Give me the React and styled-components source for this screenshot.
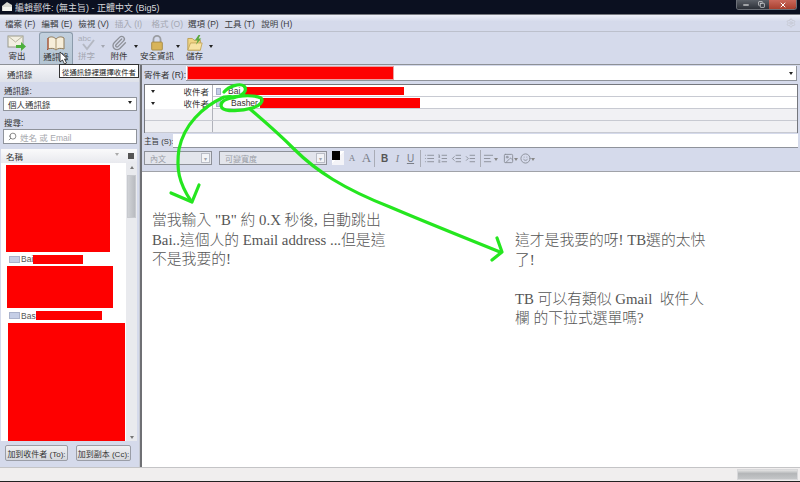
import React from 'react';
import styled, { createGlobalStyle } from 'styled-components';
import {
  Search, List, ListOrdered, IndentDecrease, IndentIncrease, AlignLeft, Image, Smile, Paperclip,
  Minus, Copy, X, Settings,
} from 'lucide-react';

const GlobalStyle = createGlobalStyle`
  html, body { margin: 0; padding: 0; background: #fff; }
  body { font-family: "Liberation Sans", "Noto Sans CJK TC", sans-serif; }
  * { box-sizing: border-box; }
`;

const Window = styled.div`
  position: relative;
  width: 800px;
  height: 482px;
  overflow: hidden;
  display: flex;
  flex-direction: column;
  background: #d5daeb;
  color: #333;
  font-size: 9px;
`;

// Title bar
const TitleBar = styled.div`
  height: 15px;
  flex: none;
  display: flex;
  align-items: center;
  padding-left: 2px;
  background: #0b1020;
  border-bottom: 1px solid #77797f;
  color: #d6d8dc;
  font-size: 9px;
`;

const TitleText = styled.span`
  margin-left: 2px;
  flex: 1;
`;

const WindowButtons = styled.div`
  display: flex;
  align-self: flex-start;
  margin-right: 3px;
  height: 10px;
  border: 1px solid #6c7078;
  border-top: 0;
  border-radius: 0 0 3px 3px;
  overflow: hidden;
`;

const WindowButton = styled.div`
  width: ${p => p.$w}px;
  display: flex;
  align-items: center;
  justify-content: center;
  color: #fff;
  background: ${p => (p.$close ? 'linear-gradient(#c9675a, #a8402f)' : 'linear-gradient(#5b6068, #2c3038)')};
`;

// Menu bar
const MenuBar = styled.div`
  height: 17px;
  flex: none;
  display: flex;
  align-items: center;
  padding: 0 4px 0 5px;
  border-bottom: 1px solid #bcc0cc;
  background: linear-gradient(#eef0f8, #d5daeb 40%);
`;

const MenuItem = styled.span`
  width: 36.6px;
  font-size: 8.5px;
  white-space: nowrap;
  color: ${p => (p.$disabled ? '#a4a7b1' : '#3a3a3e')};
`;

const GearSlot = styled.span`
  margin-left: auto;
  display: flex;
  color: #c4c7d0;
`;

// Toolbar
const Toolbar = styled.div`
  height: 33px;
  flex: none;
  display: flex;
  align-items: stretch;
  padding-left: 3px;
  border-bottom: 1px solid #8d9096;
`;

const ToolButton = styled.div`
  width: ${p => p.$w}px;
  margin-right: ${p => p.$gap || 0}px;
  display: flex;
  flex-direction: column;
  align-items: center;
  padding-top: 2px;
  border-radius: 3px 3px 0 0;
  font-size: 8.5px;
  line-height: 11px;
  white-space: nowrap;
  color: ${p => (p.$disabled ? '#a4a7b1' : '#333')};
  ${p => p.$active && 'background: linear-gradient(#c2d0de, #b4c5d3); border: 1px solid #8b9bab; border-bottom: 0;'}
`;

const ToolIcon = styled.div`
  height: 17px;
  display: flex;
  align-items: center;
  justify-content: center;
`;

const DropArrow = styled.span`
  align-self: center;
  margin: -4px 0 0 ${p => p.$left || 0}px;
  margin-right: ${p => p.$right || 0}px;
  width: 0;
  height: 0;
  border-left: 2.5px solid transparent;
  border-right: 2.5px solid transparent;
  border-top: 3px solid ${p => p.$color || '#222'};
`;

// Main split
const Main = styled.div`
  flex: 1;
  min-height: 0;
  display: grid;
  grid-template-columns: 140px 2px 1fr;
`;

const Splitter = styled.div`
  background: #6f7074;
`;

const Sidebar = styled.aside`
  display: flex;
  flex-direction: column;
  min-height: 0;
  border-right: 1px solid #c5c8d0;
`;

const SideTab = styled.div`
  height: 17px;
  flex: none;
  padding: 3px 0 0 7px;
  background: linear-gradient(#f4f5f8, #dfe2ea);
  font-size: 8.5px;
`;

const FieldLabel = styled.div`
  font-size: 8.5px;
  height: ${p => p.$h}px;
  padding: ${p => p.$top}px 0 0 4px;
`;

const SelectBox = styled.div`
  height: 14px;
  margin: 0 2px 0 3px;
  padding: 0 4px;
  display: flex;
  align-items: center;
  justify-content: space-between;
  background: #fff;
  border: 1px solid #8f939b;
  font-size: 8.5px;
`;

const SearchBox = styled(SelectBox)`
  height: 15px;
  justify-content: flex-start;
  gap: 3px;
  color: #a6a8ad;
`;

const ListHeader = styled.div`
  height: 14px;
  margin: 5px 2px 0 1px;
  flex: none;
  display: flex;
  align-items: center;
  padding: 0 3px 0 5px;
  background: linear-gradient(#fafafb, #e8e9ee);
  font-size: 8.5px;
`;

const HeaderTools = styled.span`
  margin-left: auto;
  display: flex;
  align-items: center;
  gap: 9px;
`;

const PickIcon = styled.span`
  width: 6px;
  height: 6px;
  background: #555;
`;

const ContactArea = styled.div`
  height: 278px;
  flex: none;
  margin: 0 2px 0 1px;
  display: grid;
  grid-template-columns: 1fr 11px;
  background: #fff;
`;

const ContactList = styled.div`
  overflow: hidden;
`;

const RedBlock = styled.div`
  background: #fe0000;
  margin-left: ${p => p.$left}px;
  margin-top: ${p => p.$top || 0}px;
  width: ${p => p.$w}px;
  height: ${p => p.$h}px;
`;

const ContactRow = styled.div`
  display: flex;
  align-items: center;
  height: ${p => p.$h}px;
  padding-left: 8px;
  font-size: 8.5px;
  color: #555;
`;

const CardIcon = styled.span`
  width: 11px;
  height: 7px;
  margin-right: 1px;
  background: #c5cee6;
  border: 1px solid #aab3cc;
`;

const ContactRed = styled.span`
  background: #fe0000;
  width: ${p => p.$w}px;
  height: 9px;
`;

const Scrollbar = styled.div`
  display: flex;
  flex-direction: column;
  align-items: center;
  justify-content: space-between;
  padding: 3px 0 2px;
  background: #e9eaee;
`;

const ScrollThumb = styled.div`
  width: 9px;
  height: 43px;
  margin-top: 6px;
  margin-bottom: auto;
  background: linear-gradient(90deg, #d0d2d6, #b9bbc0);
  border: 1px solid #c8cacf;
`;

const SideButtons = styled.div`
  display: flex;
  gap: 8px;
  padding: 4px 0 0 5px;
`;

const SideButton = styled.div`
  width: ${p => p.$w}px;
  height: 16px;
  display: flex;
  align-items: center;
  justify-content: center;
  background: linear-gradient(#eff0f3, #d5d7dc);
  border: 1px solid #9a9da6;
  border-radius: 2px;
  font-size: 8px;
  white-space: nowrap;
`;

// Compose pane
const Compose = styled.section`
  display: flex;
  flex-direction: column;
  min-height: 0;
`;

const FromRow = styled.div`
  display: flex;
  align-items: center;
  height: 19px;
  padding: 1px 3px 3px 2px;
`;

const FromLabel = styled.span`
  width: 42px;
  font-size: 8.5px;
  white-space: nowrap;
`;

const FromInput = styled.div`
  flex: 1;
  height: 15px;
  display: flex;
  align-items: center;
  justify-content: space-between;
  padding: 0 3px 0 2px;
  background: #fff;
  border-bottom: 1px solid #8f939b;
  border-right: 1px solid #8f939b;
`;

const SenderRed = styled.span`
  width: 205px;
  height: 12px;
  background: #fe0000;
  box-shadow: 0 0 0 1px #e9a0a0;
`;

const RecipientTable = styled.div`
  margin: 0 2px;
  height: 49px;
  border: 1px solid #75777d;
  background: #f1f1f4;
`;

const RecipientRow = styled.div`
  display: grid;
  grid-template-columns: 68px 1fr;
  height: 12px;
  border-bottom: 1px solid #c8cad2;
  background: ${p => (p.$filled ? '#fff' : '#f1f1f4')};
`;

const TypeCell = styled.div`
  display: flex;
  align-items: center;
  justify-content: space-between;
  padding: 0 3px 0 6px;
  font-size: 8.5px;
  background: ${p => (p.$filled ? '#fff' : 'transparent')};
  border-right: 1px solid #b0b2ba;
`;

const AddressCell = styled.div`
  display: flex;
  align-items: center;
  padding-left: 3px;
  font-size: 8.5px;
`;

const AddressIcon = styled.span`
  width: 5px;
  height: 7px;
  background: #c5cee6;
  border: 1px solid #a5aec8;
`;

const AddressName = styled.span`
  margin-left: ${p => p.$left}px;
  width: ${p => p.$w}px;
  color: #3a3030;
`;

const AddressRed = styled.span`
  background: #fe0000;
  width: ${p => p.$w}px;
  height: ${p => p.$h}px;
`;

const SubjectRow = styled.div`
  display: flex;
  align-items: center;
  height: 15px;
  padding: 0 2px;
`;

const SubjectLabel = styled.span`
  width: 29px;
  font-size: 7.6px;
  white-space: nowrap;
`;

const SubjectInput = styled.div`
  flex: 1;
  height: 14px;
  background: #fff;
  border-bottom: 1px solid #8f939b;
`;

const FormatBar = styled.div`
  height: 24px;
  flex: none;
  display: flex;
  align-items: center;
  padding: 0 0 3px 2px;
  border-bottom: 1px solid #a0a2a8;
  color: #6c7078;
`;

const StyleSelect = styled.div`
  width: ${p => p.$w}px;
  height: 14px;
  margin-right: ${p => p.$gap}px;
  display: flex;
  align-items: center;
  justify-content: space-between;
  padding: 0 1px 0 5px;
  background: #e3e5ec;
  border: 1px solid #8d9098;
  font-size: 8px;
  color: #9a9da6;
`;

const SelectCaret = styled.span`
  width: 9px;
  height: 10px;
  display: flex;
  align-items: center;
  justify-content: center;
  background: #f3f4f7;
  border: 1px solid #babdc6;
  color: #a0a3ab;
  font-size: 6px;
`;

const ColorSwatch = styled.div`
  position: relative;
  width: 12px;
  height: 14px;
  margin-right: 1px;
  background: linear-gradient(135deg, #fff 50%, #f4f4f8 50%);
`;

const ColorFront = styled.span`
  position: absolute;
  left: 0;
  top: 0;
  width: 8px;
  height: 9px;
  background: #000;
`;

const FormatGlyph = styled.span`
  width: ${p => p.$w}px;
  text-align: center;
  font-family: ${p => (p.$serif ? '"Liberation Serif", serif' : 'inherit')};
  font-size: ${p => p.$size || 10}px;
  font-weight: ${p => (p.$bold ? 700 : 400)};
  font-style: ${p => (p.$italic ? 'italic' : 'normal')};
  text-decoration: ${p => (p.$under ? 'underline' : 'none')};
  color: ${p => p.$color || '#7a7e88'};
`;

const FormatIcon = styled.span`
  width: ${p => p.$w}px;
  display: flex;
  justify-content: center;
  color: #8a8e98;
`;

const FormatSep = styled.span`
  width: 1px;
  height: 17px;
  margin-left: ${p => p.$left}px;
  margin-right: ${p => p.$right}px;
  background: #a9acb6;
`;

const MessageBody = styled.div`
  flex: 1;
  min-height: 0;
  display: grid;
  grid-template-columns: 363px 1fr;
  background: #fff;
  font-family: "Liberation Serif", "Noto Sans CJK TC", serif;
  font-size: 14.8px;
  line-height: 19.6px;
  font-weight: 300;
  color: #555;
`;

const Note = styled.div`
  padding: ${p => p.$top}px 0 0 ${p => p.$left}px;
  white-space: pre;
`;

const NoteLine = styled.div`
  min-height: 19.6px;
`;

const StatusBar = styled.div`
  height: 15px;
  flex: none;
  display: flex;
  justify-content: flex-end;
  padding: 1px 2px 1px 0;
  background: #f0eeee;
  border-top: 1px solid #c4c4c6;
  border-bottom: 1px solid #222;
`;

const ProgressSlot = styled.div`
  width: 61px;
  background: linear-gradient(#e4e4e4, #b4b6b8 40%, #c4c6c8);
  border: 1px solid #d8d8da;
`;

// Things lying over the window
const Tooltip = styled.div`
  position: absolute;
  left: 59px;
  top: 64px;
  width: 80px;
  height: 14px;
  display: flex;
  align-items: center;
  justify-content: center;
  background: #fff;
  border: 1px solid #333;
  font-size: 7.4px;
  white-space: nowrap;
  color: #222;
`;

const Pointer = styled.svg`
  position: absolute;
  left: 59px;
  top: 51px;
`;

const Scribble = styled.svg`
  position: absolute;
  inset: 0;
  pointer-events: none;
`;

const menus = [
  ['檔案 (F)'], ['編輯 (E)'], ['檢視 (V)'], ['插入 (I)', true], ['格式 (O)', true],
  ['選項 (P)'], ['工具 (T)'], ['說明 (H)'],
];

const SendIcon = () => (
  <svg width="20" height="17" viewBox="0 0 20 17">
    <rect x="1" y="2" width="15" height="11" fill="#f2efe2" stroke="#9a9a8c" />
    <path d="M1 2l7.5 6L16 2" fill="none" stroke="#b8b6a0" />
    <path d="M9 11h5V8l5 4.5-5 4.5v-3H9z" fill="#4caf3c" />
  </svg>
);

const BookIcon = () => (
  <svg width="20" height="17" viewBox="0 0 20 17">
    <path d="M2 3c3-2 6-1 8 1 2-2 5-3 8-1v11c-3-1-6-1-8 1-2-2-5-2-8-1z" fill="#f6eeda" stroke="#8f7a58" />
    <path d="M10 4v11" stroke="#a99670" />
    <path d="M2 3v11l-1 1" fill="none" stroke="#b2492f" />
  </svg>
);

const SpellIcon = () => (
  <svg width="20" height="17" viewBox="0 0 20 17">
    <text x="1" y="7" fontSize="8" fontFamily="Liberation Sans" fill="#a9adb8">abc</text>
    <path d="M6 10l4 5 7-9" fill="none" stroke="#b4b8c2" strokeWidth="2" />
  </svg>
);

const LockIcon = () => (
  <svg width="16" height="17" viewBox="0 0 18 19">
    <path d="M5 9V6a4 4 0 0 1 8 0v3" fill="none" stroke="#9b9da2" strokeWidth="2" />
    <rect x="3" y="9" width="12" height="9" rx="1" fill="#d8b45a" stroke="#a58a44" />
  </svg>
);

const SaveIcon = () => (
  <svg width="18" height="17" viewBox="0 0 20 19">
    <path d="M2 5h5l2 2h7v11H2z" fill="#f0d585" stroke="#b89a4e" />
    <path d="M2 18l3-8h13l-2 8z" fill="#f7e3a3" stroke="#c4a75c" />
    <path d="M14 1l-4 6h3l-2 5 6-7h-3l2-4z" fill="#5aa83c" />
  </svg>
);

const App = () => (
  <Window>
    <GlobalStyle />
    <TitleBar>
      <svg width="11" height="10" viewBox="0 0 11 10">
        <path d="M0 4l5-4 5 3v6H0z" fill="#d8d8d0" />
        <path d="M1 5h9v4H1z" fill="#f4f4ee" />
      </svg>
      <TitleText>編輯郵件: (無主旨) - 正體中文 (Big5)</TitleText>
      <WindowButtons>
        <WindowButton $w={17}><Minus size={8} strokeWidth={3} /></WindowButton>
        <WindowButton $w={15}><Copy size={7} strokeWidth={2} /></WindowButton>
        <WindowButton $w={27} $close><X size={8} strokeWidth={3} /></WindowButton>
      </WindowButtons>
    </TitleBar>

    <MenuBar>
      {menus.map(([label, disabled]) => (
        <MenuItem key={label} $disabled={disabled}>{label}</MenuItem>
      ))}
      <GearSlot><Settings size={10} /></GearSlot>
    </MenuBar>

    <Toolbar>
      <ToolButton $w={28} $gap={8}><ToolIcon><SendIcon /></ToolIcon>寄出</ToolButton>
      <ToolButton $w={34} $active><ToolIcon><BookIcon /></ToolIcon>通訊錄</ToolButton>
      <ToolButton $w={27} $disabled><ToolIcon><SpellIcon /></ToolIcon>拼字</ToolButton>
      <DropArrow $color="#a4a7b1" $left={1} />
      <ToolButton $w={28}><ToolIcon><Paperclip size={16} color="#8e9199" /></ToolIcon>附件</ToolButton>
      <DropArrow $left={1} />
      <ToolButton $w={38}><ToolIcon><LockIcon /></ToolIcon>安全資訊</ToolButton>
      <DropArrow />
      <ToolButton $w={29}><ToolIcon><SaveIcon /></ToolIcon>儲存</ToolButton>
      <DropArrow />
    </Toolbar>

    <Main>
      <Sidebar>
        <SideTab>通訊錄</SideTab>
        <FieldLabel $h={15} $top={2}>通訊錄:</FieldLabel>
        <SelectBox>個人通訊錄<DropArrow /></SelectBox>
        <FieldLabel $h={18} $top={5}>搜尋:</FieldLabel>
        <SearchBox>
          <Search size={9} color="#666" style={{ transform: 'scaleX(-1)' }} />
          姓名 或 Email
        </SearchBox>
        <ListHeader>
          名稱
          <HeaderTools>
            <DropArrow $color="#aaa" />
            <PickIcon />
          </HeaderTools>
        </ListHeader>
        <ContactArea>
          <ContactList>
            <RedBlock $left={5} $top={2} $w={104} $h={87} />
            <ContactRow $h={14}><CardIcon />Bai<ContactRed $w={50} /></ContactRow>
            <RedBlock $left={6} $w={106} $h={42} />
            <ContactRow $h={15}><CardIcon />Bas<ContactRed $w={66} /></ContactRow>
            <RedBlock $left={7} $w={117} $h={118} />
          </ContactList>
          <Scrollbar>
            <DropArrow $color="#777" style={{ transform: 'rotate(180deg)', margin: 0 }} />
            <ScrollThumb />
            <DropArrow $color="#777" style={{ margin: 0 }} />
          </Scrollbar>
        </ContactArea>
        <SideButtons>
          <SideButton $w={63}>加到收件者 (To):</SideButton>
          <SideButton $w={55}>加到副本 (Cc):</SideButton>
        </SideButtons>
      </Sidebar>
      <Splitter />
      <Compose>
        <FromRow>
          <FromLabel>寄件者 (R):</FromLabel>
          <FromInput>
            <SenderRed />
            <DropArrow style={{ margin: 0 }} />
          </FromInput>
        </FromRow>
        <RecipientTable>
          <RecipientRow $filled>
            <TypeCell $filled><DropArrow style={{ margin: 0 }} />收件者</TypeCell>
            <AddressCell>
              <AddressIcon />
              <AddressName $left={7} $w={17}>Bai</AddressName>
              <AddressRed $w={159} $h={8} />
            </AddressCell>
          </RecipientRow>
          <RecipientRow $filled>
            <TypeCell $filled><DropArrow style={{ margin: 0 }} />收件者</TypeCell>
            <AddressCell>
              <AddressIcon />
              <AddressName $left={10} $w={29}>Basher</AddressName>
              <AddressRed $w={160} $h={10} />
            </AddressCell>
          </RecipientRow>
          <RecipientRow><TypeCell /></RecipientRow>
          <RecipientRow><TypeCell /></RecipientRow>
        </RecipientTable>
        <SubjectRow>
          <SubjectLabel>主旨 (S):</SubjectLabel>
          <SubjectInput />
        </SubjectRow>
        <FormatBar>
          <StyleSelect $w={68} $gap={7}>內文<SelectCaret>▾</SelectCaret></StyleSelect>
          <StyleSelect $w={108} $gap={5}>可變寬度<SelectCaret>▾</SelectCaret></StyleSelect>
          <ColorSwatch><ColorFront /></ColorSwatch>
          <FormatGlyph $w={14} $size={9} $serif>A</FormatGlyph>
          <FormatGlyph $w={15} $size={13} $serif>A</FormatGlyph>
          <FormatSep $left={0} $right={3} />
          <FormatGlyph $w={13} $bold $color="#555">B</FormatGlyph>
          <FormatGlyph $w={13} $italic $serif>I</FormatGlyph>
          <FormatGlyph $w={13} $under>U</FormatGlyph>
          <FormatSep $left={3} $right={2} />
          <FormatIcon $w={13}><List size={11} /></FormatIcon>
          <FormatIcon $w={13}><ListOrdered size={11} /></FormatIcon>
          <FormatIcon $w={14}><IndentDecrease size={11} /></FormatIcon>
          <FormatIcon $w={14}><IndentIncrease size={11} /></FormatIcon>
          <FormatSep $left={3} $right={2} />
          <FormatIcon $w={11}><AlignLeft size={11} /></FormatIcon>
          <DropArrow $color="#888" $right={4} style={{ marginTop: 2 }} />
          <FormatIcon $w={12}><Image size={11} /></FormatIcon>
          <DropArrow $color="#888" $right={1} style={{ marginTop: 2 }} />
          <FormatIcon $w={12}><Smile size={11} /></FormatIcon>
          <DropArrow $color="#888" style={{ marginTop: 2 }} />
        </FormatBar>
        <MessageBody>
          <Note $top={39} $left={10}>
            <NoteLine>當我輸入 "B" 約 0.X 秒後, 自動跳出</NoteLine>
            <NoteLine>Bai..這個人的 Email address ...但是這</NoteLine>
            <NoteLine>不是我要的!</NoteLine>
          </Note>
          <Note $top={59} $left={10}>
            <NoteLine>這才是我要的呀! TB選的太快</NoteLine>
            <NoteLine>了!</NoteLine>
            <NoteLine />
            <NoteLine>TB 可以有類似 Gmail  收件人</NoteLine>
            <NoteLine>欄 的下拉式選單嗎?</NoteLine>
          </Note>
        </MessageBody>
      </Compose>
    </Main>

    <StatusBar><ProgressSlot /></StatusBar>

    <Tooltip>從通訊錄裡選擇收件者</Tooltip>
    <Pointer width="9" height="14" viewBox="0 0 9 14">
      <path d="M1 1v10l2.500-2 2 4 2-1-2-4h3z" fill="#fff" stroke="#222" strokeWidth="0.8" />
    </Pointer>

    <Scribble width="800" height="482" viewBox="0 0 800 482" fill="none" stroke="#25e61f" strokeWidth="3.2" strokeLinecap="round" strokeLinejoin="round">
      <path d="M224 92c5-6 16-9 20-6 3 3 1 7-3 9" />
      <path d="M244 95c-8 3-14 1-20 2-22 10-40 28-45 52-3 20 0 34 12 52" />
      <path d="M171 193l21 9 7-17" />
      <path d="M233 98c8-3 22-3 28 0 3 3-1 8-9 10-10 3-26 4-30 0-3-5 2-9 10-10" />
      <path d="M250 109c14 12 30 26 44 40 22 22 50 40 96 58 40 17 78 32 110 45" />
      <path d="M497 238l5 14-10 8" />
    </Scribble>
  </Window>
);

export default App;
